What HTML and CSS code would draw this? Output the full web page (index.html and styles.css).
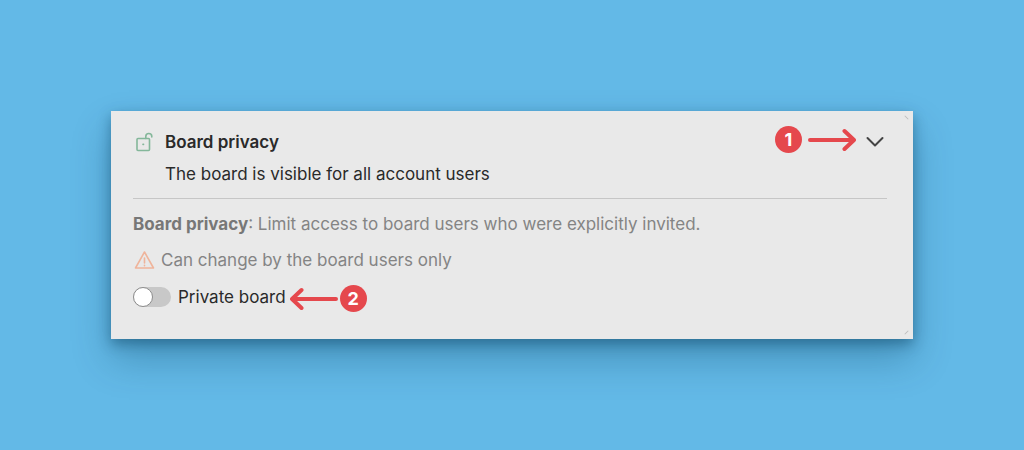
FILE: index.html
```html
<!DOCTYPE html>
<html lang="en">
<head>
  <meta charset="UTF-8" />
  <meta name="viewport" content="width=device-width, initial-scale=1.0" />
  <title>Board privacy</title>
  <link rel="stylesheet" href="styles.css">
</head>
<body>
  <section class="card">
    <header class="card-header">
      <svg class="lock" viewBox="0 0 18 20" aria-hidden="true">
        <rect x="2" y="6.5" width="12.5" height="12" rx="1" />
        <path d="M10.8 6.5V4.4C10.8 0.6 16.8 0.6 16.8 4.4V5" />
        <path d="M8 12.4h.5" />
      </svg>
      <div class="heading">
        <h1>Board privacy</h1>
        <p>The board is visible for all account users</p>
      </div>
      <div class="callout">
        <span class="badge">1</span>
        <svg class="arrow" viewBox="0 0 48 24" aria-hidden="true"><path d="M2 12H46M36.5 3L46 12L36.5 21" /></svg>
      </div>
      <button class="toggle" type="button" aria-label="Collapse" aria-expanded="true">
        <svg class="chevron" viewBox="0 0 18 12" aria-hidden="true"><path d="M1.5 2L9 9.5L16.5 2" /></svg>
      </button>
    </header>

    <div class="card-body">
      <p class="muted"><strong>Board privacy</strong>: Limit access to board users who were explicitly invited.</p>
      <p class="muted warning">
        <svg class="alert" viewBox="0 0 21 20" aria-hidden="true">
          <path d="M10.5 2L19.5 18H1.5Z" />
          <path d="M10.5 8v5M10.5 15.2v.6" />
        </svg>
        Can change by the board users only
      </p>
      <div class="option">
        <input class="switch" type="checkbox" id="private" />
        <label for="private">Private board</label>
        <div class="callout callout-left">
          <svg class="arrow" viewBox="0 0 48 24" aria-hidden="true"><path d="M46 12H2M11.5 3L2 12L11.5 21" /></svg>
          <span class="badge">2</span>
        </div>
      </div>
    </div>
  </section>
</body>
</html>
```
FILE: styles.css
```css
:root {
  --bg: #63b9e7;
  --card: #e9e9e9;
  --text: #2a2a2a;
  --muted: #848484;
  --red: #e5484d;
}
*,
*::before,
*::after {
  box-sizing: border-box;
}
body {
  margin: 0;
  min-height: 100vh;
  display: flex;
  justify-content: center;
  align-items: center;
  background: var(--bg);
  color: var(--text);
  font-family: Inter, "Liberation Sans", sans-serif;
  font-size: 17px;
  padding: 24px;
}
h1,
p {
  margin: 0;
  font-size: 17px;
  line-height: 32px;
}
h1 {
  font-weight: 600;
}
svg {
  display: block;
  flex: none;
  fill: none;
  stroke-linecap: round;
  stroke-linejoin: round;
}
.card {
  position: relative;
  width: 100%;
  max-width: 802px;
  padding: 15px 26px 23px 22px;
  background: var(--card);
  box-shadow: 0 5px 12px rgba(0, 50, 80, 0.4), 0 20px 36px rgba(0, 60, 90, 0.3);
}
/* resize marks in the right corners */
.card::before,
.card::after {
  content: "";
  position: absolute;
  right: 4px;
  width: 5px;
  height: 1px;
  background: #bdbdbd;
}
.card::before {
  top: 6px;
  transform: rotate(45deg);
}
.card::after {
  bottom: 6px;
  transform: rotate(-45deg);
}
.card-header {
  display: flex;
  align-items: flex-start;
  padding-bottom: 8px;
  border-bottom: 1px solid #c6c6c6;
}
.lock {
  width: 18px;
  height: 20px;
  margin: 6px 12px 0 2px;
  stroke: #84b79a;
  stroke-width: 1.6;
}
.heading {
  flex: 1;
}
.callout {
  display: flex;
  align-items: center;
  gap: 6px;
}
.card-header .callout {
  margin-right: 10px;
}
.badge {
  width: 27px;
  height: 27px;
  border-radius: 50%;
  background: var(--red);
  color: #fff;
  font-size: 18px;
  font-weight: 700;
  line-height: 27px;
  text-align: center;
}
.arrow {
  width: 48px;
  height: 24px;
  stroke: var(--red);
  stroke-width: 4;
}
.toggle {
  display: flex;
  align-items: center;
  height: 32px;
  padding: 0;
  border: 0;
  background: none;
  margin-right: 3px;
}
.chevron {
  width: 18px;
  height: 12px;
  stroke: #444;
  stroke-width: 2;
}
.card-body {
  padding-top: 7px;
}
.muted {
  color: var(--muted);
  line-height: 36px;
}
.muted strong {
  font-weight: 700;
  color: #777;
}
.warning {
  display: flex;
  align-items: center;
  gap: 6px;
}
.alert {
  width: 21px;
  height: 20px;
  margin-left: 1px;
  stroke: #efb49b;
  stroke-width: 1.6;
}
.option {
  display: flex;
  align-items: center;
  height: 38px;
}
.switch {
  appearance: none;
  display: flex;
  width: 38px;
  height: 20px;
  margin: 0 7px 0 0;
  border-radius: 10px;
  background: #c8c8c8;
}
.switch::before {
  content: "";
  width: 20px;
  height: 20px;
  border: 1px solid #8c8c8c;
  border-radius: 50%;
  background: #fff;
}
.switch:checked {
  justify-content: flex-end;
  background: #84b79a;
}
.callout-left {
  gap: 2px;
  margin-left: 4px;
  padding-top: 3px;
}
```
